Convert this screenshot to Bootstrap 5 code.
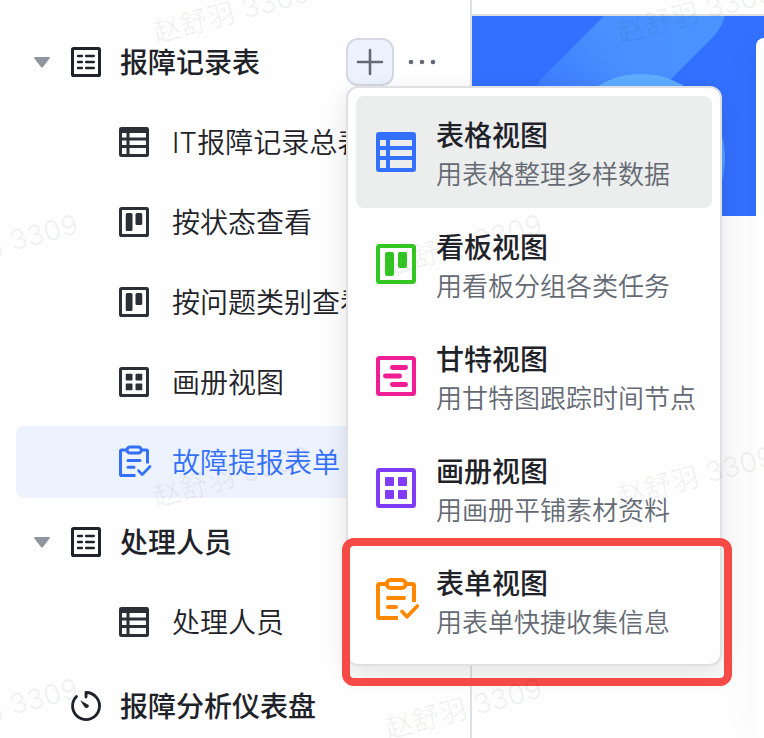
<!DOCTYPE html>
<html lang="zh-CN">
<head>
<meta charset="utf-8">
<meta name="viewport" content="width=device-width, initial-scale=1">
<title>报障记录表</title>
<link href="https://cdn.jsdelivr.net/npm/bootstrap@5.3.0/dist/css/bootstrap.min.css" rel="stylesheet">
<style>
  :root { --ink: #1f2329; --icon: #2b2f36; --muted: #646a73; --line: #dee0e3; --blue: #3370ff; --tint: #edf2ff; }
  body { font-family: Inter, "Noto Sans CJK SC", sans-serif; font-size: 28px; font-weight: 350; line-height: 40px; color: var(--ink); background: #fefefe; }
  button { font: inherit; color: inherit; }
  svg { flex: none; overflow: visible; }

  .side-pane { width: 472px; padding: 26px 14px 0 16px; border-right: 2px solid var(--line); }
  .tree-row { height: 72px; border-radius: 8px; color: var(--ink); white-space: nowrap; }
  .tree-row span { padding-top: 2px; }
  .tree-head { padding-left: 14px; padding-right: 18px; font-weight: 500; }
  .tree-head a, .tree-board { color: var(--ink); gap: 19px; }
  .tree-head .toggle-btn { width: 24px; margin-right: 17px; }
  .tree-leaf { padding-left: 103px; gap: 23px; color: var(--icon); }
  .tree-leaf.active { background: var(--tint); color: var(--blue); }
  .tree-leaf span { color: var(--ink); }
  .tree-leaf.active span { color: inherit; }
  .tree-board { padding-left: 55px; font-weight: 500; margin-top: 4px; }
  .tree-icon { width: 30px; height: 30px; }
  .plain-btn { border: 0; padding: 0; background: none; }
  .add-btn { width: 48px; height: 48px; border: 2px solid #d3d8e2; border-radius: 12px; background: var(--tint); padding: 0; }
  .more-btn { width: 32px; height: 48px; margin-left: 12px; }

  .view-menu { top: 100%; left: 0; z-index: 10; width: 376px; padding: 8px; border: 2px solid var(--line); border-radius: 12px; background: #fefefe; box-shadow: 0 8px 24px rgba(31, 35, 41, .12); }
  .view-item { height: 112px; gap: 20px; padding: 0 0 0 20px; border: 0; border-radius: 8px; background: none; white-space: nowrap; }
  .view-item.active { background: #eceded; }
  .view-item svg { width: 40px; height: 40px; }
  .view-item .view-text { padding-top: 6px; }
  .view-name { font-weight: 500; line-height: 40px; }
  .view-desc { font-size: 26px; font-weight: 350; line-height: 38px; color: var(--muted); }
  .c-blue { color: #3370ff; } .c-green { color: #34c724; } .c-pink { color: #f01d94; } .c-violet { color: #7f3bf5; } .c-orange { color: #ff8800; }
  .highlight-frame { z-index: 11; inset: 450px -12px -22px -6px; border: 8px solid #f54a45; border-radius: 12px; pointer-events: none; }

  .main-pane { padding-top: 14px; }
  .banner { height: 200px; background: var(--blue); }
  .main-top { border-top: 2px solid var(--line); }
  .form-card { margin-left: 284px; margin-top: -178px; border-radius: 16px 0 0 0; background: #fefefe; box-shadow: 0 0 32px rgba(0, 0, 0, .08); }
  .stamp { z-index: 20; pointer-events: none; fill: #1f2329; fill-opacity: .06; font-size: 28px; font-weight: 400; text-anchor: middle; }
</style>
</head>
<body>
<svg class="d-none" aria-hidden="true">
  <symbol id="i-list" viewBox="0 0 40 40" overflow="visible">
    <rect x="2" y="2" width="36" height="36" rx="1.5" fill="none" stroke="currentColor" stroke-width="4"/>
    <path d="M9.500 12h5M20.300 12h10M9.500 20h5M20.300 20h10M9.500 28h5M20.300 28h10" stroke="currentColor" stroke-width="3.400" stroke-linecap="round"/>
  </symbol>
  <symbol id="i-table" viewBox="0 0 40 40">
    <path fill="currentColor" fill-rule="evenodd" d="M3 0h34a3 3 0 0 1 3 3v34a3 3 0 0 1-3 3H3a3 3 0 0 1-3-3V3a3 3 0 0 1 3-3zM4 8v6h6V8zM14 8v6h22V8zM4 18v6h6v-6zM14 18v6h22v-6zM4 28v8h6v-8zM14 28v8h22v-8z"/>
  </symbol>
  <symbol id="i-board" viewBox="0 0 40 40">
    <rect x="2" y="2" width="36" height="36" rx="1.5" fill="none" stroke="currentColor" stroke-width="4"/>
    <rect x="9" y="8" width="9" height="24" rx="2" fill="currentColor"/><rect x="22" y="8" width="9" height="16" rx="2" fill="currentColor"/>
  </symbol>
  <symbol id="i-gantt" viewBox="0 0 40 40">
    <rect x="2" y="2" width="36" height="36" rx="1.5" fill="none" stroke="currentColor" stroke-width="4"/>
    <path d="M16.400 11.500h13.200M9.400 20h14.200M16.400 28.500h13.200" stroke="currentColor" stroke-width="4.800" stroke-linecap="round"/>
  </symbol>
  <symbol id="i-gallery" viewBox="0 0 40 40">
    <rect x="2" y="2" width="36" height="36" rx="1.5" fill="none" stroke="currentColor" stroke-width="4"/>
    <path fill="currentColor" d="M10 9h7a1 1 0 0 1 1 1v7a1 1 0 0 1-1 1h-7a1 1 0 0 1-1-1v-7a1 1 0 0 1 1-1zM23 9h7a1 1 0 0 1 1 1v7a1 1 0 0 1-1 1h-7a1 1 0 0 1-1-1v-7a1 1 0 0 1 1-1zM10 22h7a1 1 0 0 1 1 1v7a1 1 0 0 1-1 1h-7a1 1 0 0 1-1-1v-7a1 1 0 0 1 1-1zM23 22h7a1 1 0 0 1 1 1v7a1 1 0 0 1-1 1h-7a1 1 0 0 1-1-1v-7a1 1 0 0 1 1-1z"/>
  </symbol>
  <symbol id="i-form" viewBox="0 0 40 40" overflow="visible">
    <g fill="none" stroke="currentColor" stroke-width="4">
      <path d="M10 4H3.500Q2 4 2 5.500V36.500Q2 38 3.500 38H22M30 4H36.500Q38 4 38 5.500V22"/>
      <rect x="10.700" y="0" width="19" height="8" rx="4"/>
      <path d="M12 18H28M12 27H20" stroke-linecap="round"/>
      <path d="M26 31.500L31 36.800L41.300 26" stroke-linecap="round" stroke-linejoin="round" stroke-width="3.700"/>
    </g>
  </symbol>
  <symbol id="i-dash" viewBox="0 0 40 40" overflow="visible">
    <path d="M20 8V2A18 18 0 1 1 7.300 7.300" fill="none" stroke="currentColor" stroke-width="3.800" stroke-linejoin="round" stroke-linecap="round"/>
    <path d="M12.200 12.200L23.500 18.800Q24.500 22.500 20.500 22.800Q19 22.800 18.300 21.800Z" fill="currentColor"/>
  </symbol>
</svg>

<div class="d-flex vh-100 overflow-hidden position-relative">
  <aside class="side-pane flex-shrink-0">
    <nav class="d-flex flex-column gap-2" aria-label="数据表">
      <div class="tree-row tree-head d-flex align-items-center">
        <button class="plain-btn toggle-btn d-flex justify-content-center" type="button" aria-label="收起">
          <svg width="16" height="11"><path d="M1 0h14q1.500 .3 .6 1.500L9 10q-1 1.200-2 0L.4 1.500Q-.5 .3 1 0z" fill="#8f959e"/></svg>
        </button>
        <a href="#" class="d-flex align-items-center flex-grow-1 text-decoration-none"><svg class="tree-icon"><use href="#i-list"/></svg><span>报障记录表</span></a>
        <div class="position-relative">
          <button class="add-btn d-flex align-items-center justify-content-center" type="button" aria-label="新建视图" aria-expanded="true">
            <svg width="26" height="26"><path d="M13 1v24M1 13h24" stroke="#646a73" stroke-width="2.600" stroke-linecap="round"/></svg>
          </button>
          <div class="view-menu position-absolute" role="menu">
            <button class="view-item active d-flex align-items-center w-100 text-start" type="button" role="menuitem">
              <svg class="c-blue"><use href="#i-table"/></svg>
              <span class="view-text d-flex flex-column"><span class="view-name p-0">表格视图</span><span class="view-desc p-0">用表格整理多样数据</span></span>
            </button>
            <button class="view-item d-flex align-items-center w-100 text-start" type="button" role="menuitem">
              <svg class="c-green"><use href="#i-board"/></svg>
              <span class="view-text d-flex flex-column"><span class="view-name p-0">看板视图</span><span class="view-desc p-0">用看板分组各类任务</span></span>
            </button>
            <button class="view-item d-flex align-items-center w-100 text-start" type="button" role="menuitem">
              <svg class="c-pink"><use href="#i-gantt"/></svg>
              <span class="view-text d-flex flex-column"><span class="view-name p-0">甘特视图</span><span class="view-desc p-0">用甘特图跟踪时间节点</span></span>
            </button>
            <button class="view-item d-flex align-items-center w-100 text-start" type="button" role="menuitem">
              <svg class="c-violet"><use href="#i-gallery"/></svg>
              <span class="view-text d-flex flex-column"><span class="view-name p-0">画册视图</span><span class="view-desc p-0">用画册平铺素材资料</span></span>
            </button>
            <button class="view-item d-flex align-items-center w-100 text-start" type="button" role="menuitem">
              <svg class="c-orange"><use href="#i-form"/></svg>
              <span class="view-text d-flex flex-column"><span class="view-name p-0">表单视图</span><span class="view-desc p-0">用表单快捷收集信息</span></span>
            </button>
            <div class="highlight-frame position-absolute"></div>
          </div>
        </div>
        <button class="plain-btn more-btn d-flex align-items-center justify-content-center" type="button" aria-label="更多">
          <svg width="28" height="6" fill="#646a73"><circle cx="3" cy="3" r="2.300"/><circle cx="14" cy="3" r="2.300"/><circle cx="25" cy="3" r="2.300"/></svg>
        </button>
      </div>
      <a href="#" class="tree-row tree-leaf d-flex align-items-center text-decoration-none"><svg class="tree-icon"><use href="#i-table"/></svg><span>IT报障记录总表</span></a>
      <a href="#" class="tree-row tree-leaf d-flex align-items-center text-decoration-none"><svg class="tree-icon"><use href="#i-board"/></svg><span>按状态查看</span></a>
      <a href="#" class="tree-row tree-leaf d-flex align-items-center text-decoration-none"><svg class="tree-icon"><use href="#i-board"/></svg><span>按问题类别查看</span></a>
      <a href="#" class="tree-row tree-leaf d-flex align-items-center text-decoration-none"><svg class="tree-icon"><use href="#i-gallery"/></svg><span>画册视图</span></a>
      <a href="#" class="tree-row tree-leaf active d-flex align-items-center text-decoration-none" aria-current="page"><svg class="tree-icon"><use href="#i-form"/></svg><span>故障提报表单</span></a>
      <div class="tree-row tree-head d-flex align-items-center">
        <button class="plain-btn toggle-btn d-flex justify-content-center" type="button" aria-label="收起">
          <svg width="16" height="11"><path d="M1 0h14q1.500 .3 .6 1.500L9 10q-1 1.200-2 0L.4 1.500Q-.5 .3 1 0z" fill="#8f959e"/></svg>
        </button>
        <a href="#" class="d-flex align-items-center flex-grow-1 text-decoration-none"><svg class="tree-icon"><use href="#i-list"/></svg><span>处理人员</span></a>
      </div>
      <a href="#" class="tree-row tree-leaf d-flex align-items-center text-decoration-none"><svg class="tree-icon"><use href="#i-table"/></svg><span>处理人员</span></a>
      <a href="#" class="tree-row tree-board d-flex align-items-center text-decoration-none"><svg class="tree-icon"><use href="#i-dash"/></svg><span>报障分析仪表盘</span></a>
    </nav>
  </aside>

  <main class="main-pane flex-grow-1 d-flex flex-column overflow-hidden">
    <div class="main-top d-flex flex-column flex-grow-1">
      <div class="banner flex-shrink-0 overflow-hidden">
        <svg class="d-block" width="284" height="200" aria-hidden="true">
          <defs>
            <linearGradient id="g-bar" gradientUnits="userSpaceOnUse" x1="230" y1="0" x2="80" y2="110"><stop offset="0" stop-color="#4a94ff"/><stop offset=".5" stop-color="#4a8fff"/><stop offset="1" stop-color="#3a79ff"/></linearGradient>
            <linearGradient id="g-disc" x1="0" y1="0" x2="0" y2="1"><stop offset="0" stop-color="#5eaeff"/><stop offset="1" stop-color="#4791ff"/></linearGradient>
          </defs>
          <path d="M105 92L208-11" stroke="url(#g-bar)" stroke-width="92" stroke-linecap="round"/>
          <circle cx="169" cy="142" r="84" fill="url(#g-disc)"/>
        </svg>
      </div>
      <div class="form-card flex-grow-1"></div>
    </div>
  </main>

  <svg class="stamp position-absolute top-0 start-0 w-100 h-100" aria-hidden="true">
    <g id="stamp-rows">
      <text transform="translate(234 22) rotate(-15)">赵舒羽 3309</text>
      <text transform="translate(698 22) rotate(-15)">赵舒羽 3309</text>
      <text transform="translate(2 254) rotate(-15)">赵舒羽 3309</text>
      <text transform="translate(466 254) rotate(-15)">赵舒羽 3309</text>
    </g>
    <use href="#stamp-rows" y="464"/>
  </svg>
</div>
<script src="https://cdn.jsdelivr.net/npm/bootstrap@5.3.0/dist/js/bootstrap.bundle.min.js"></script>
</body>
</html>
